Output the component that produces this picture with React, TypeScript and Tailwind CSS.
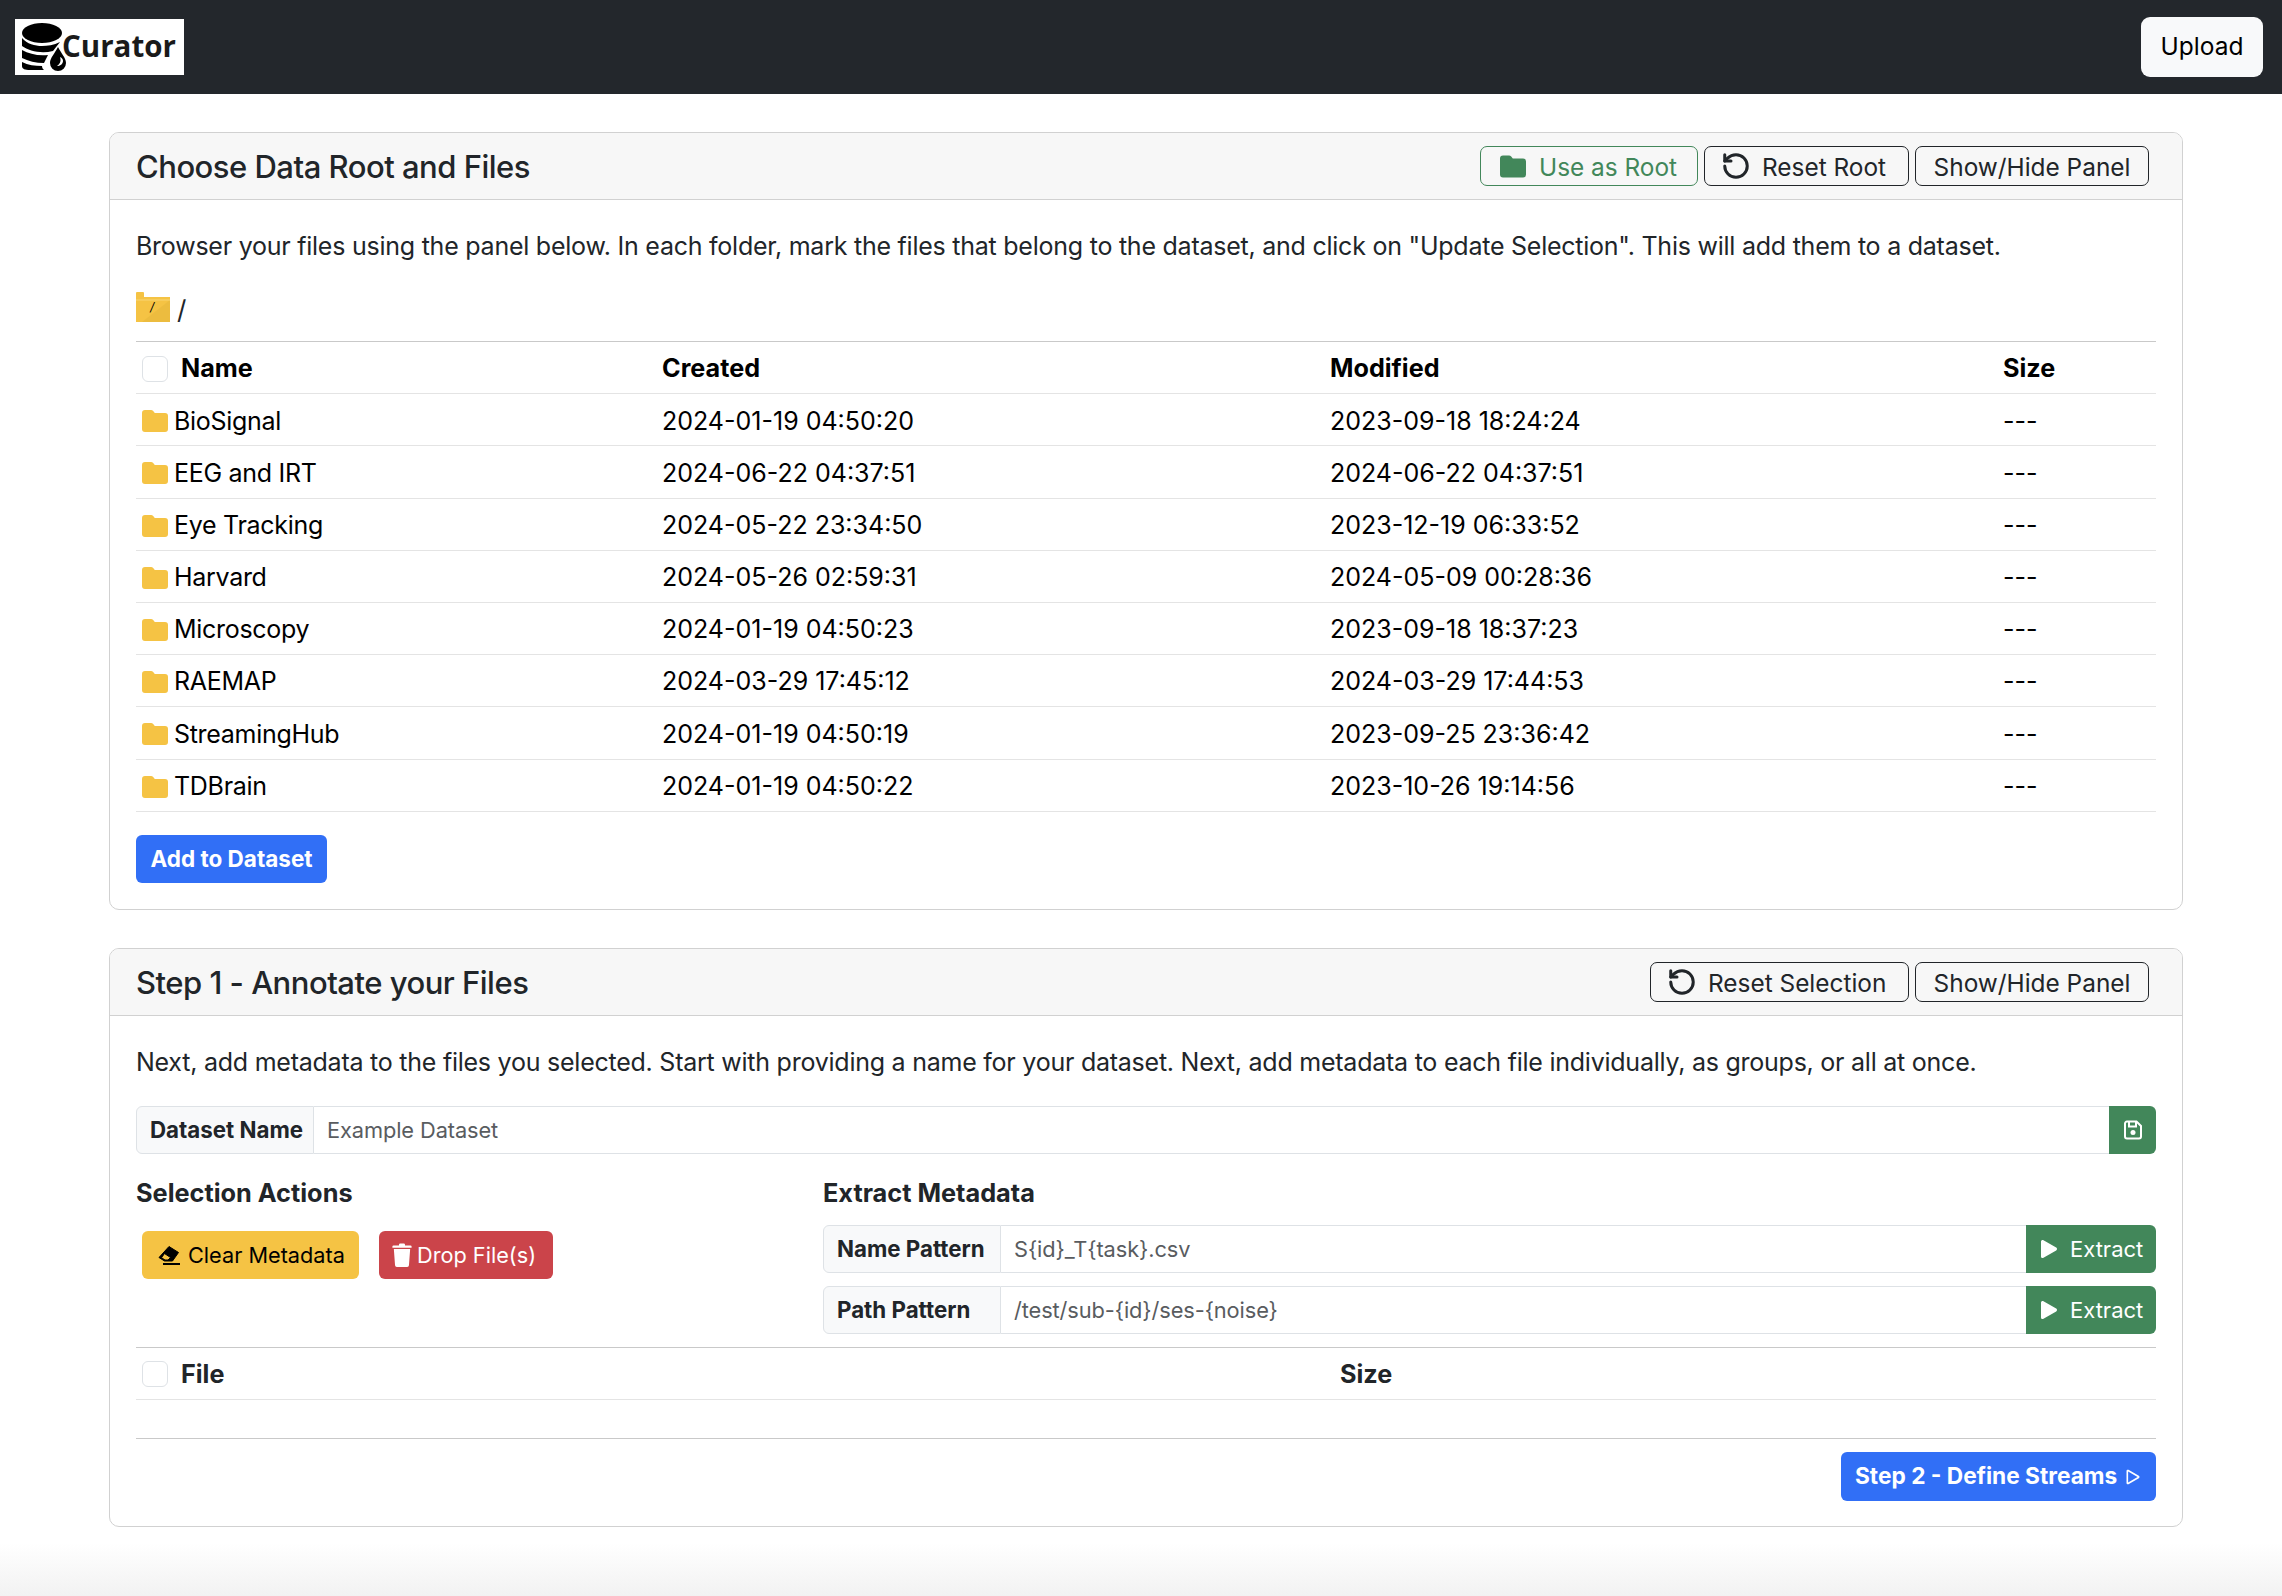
import React from "react";
import { RotateCcw } from "lucide-react";
import { BsPlay, BsPlayFill } from "react-icons/bs";

const rows = [
  ["BioSignal", "2024-01-19 04:50:20", "2023-09-18 18:24:24"],
  ["EEG and IRT", "2024-06-22 04:37:51", "2024-06-22 04:37:51"],
  ["Eye Tracking", "2024-05-22 23:34:50", "2023-12-19 06:33:52"],
  ["Harvard", "2024-05-26 02:59:31", "2024-05-09 00:28:36"],
  ["Microscopy", "2024-01-19 04:50:23", "2023-09-18 18:37:23"],
  ["RAEMAP", "2024-03-29 17:45:12", "2024-03-29 17:44:53"],
  ["StreamingHub", "2024-01-19 04:50:19", "2023-09-25 23:36:42"],
  ["TDBrain", "2024-01-19 04:50:22", "2023-10-26 19:14:56"],
];

function FolderFill({ className }: { className: string }) {
  return (
    <svg viewBox="0 0 26 22" className={className} fill="currentColor">
      <path d="M0 3a3 3 0 0 1 3-3h6a3 3 0 0 1 2.2 1l1.600 2H23a3 3 0 0 1 3 3v13a3 3 0 0 1-3 3H3a3 3 0 0 1-3-3z" />
    </svg>
  );
}

function OutlineBtn({ children, className = "" }: { children: React.ReactNode; className?: string }) {
  return (
    <button className={`h-10 pt-[2px] flex items-center rounded-[7px] border border-[#212529] text-[24.4px] text-[#212529] whitespace-nowrap ${className}`}>
      {children}
    </button>
  );
}

function Header({ title, children }: { title: string; children: React.ReactNode }) {
  return (
    <div className="h-[67px] flex items-center justify-between bg-[#f7f7f7] border-b border-[#d1d1d1] pl-[26px] pr-[33px] rounded-t-[9px]">
      <h5 className="text-[31px] tracking-[-0.5px] font-medium text-[#212529] pt-[2px]">{title}</h5>
      <div className="flex gap-[6px]">{children}</div>
    </div>
  );
}

function InputRow({ label, value, children }: { label: string; value: string; children: React.ReactNode }) {
  return (
    <div className="flex h-12">
      <div className="w-[178px] flex items-center px-[13px] bg-[#f8f9fa] border border-[#dee2e6] rounded-l-[6px] text-[22.3px] font-bold text-[#212529] whitespace-nowrap">{label}</div>
      <div className="flex-1 flex items-center px-[13px] border-y border-[#dee2e6] text-[21.8px] tracking-[-0.1px] text-[#595c5f]">{value}</div>
      {children}
    </div>
  );
}

function Extract() {
  return (
    <button className="w-[130px] h-12 flex items-center pl-[7px] gap-[5px] bg-[#42875a] rounded-r-[6px] text-[22px] text-white">
      <BsPlayFill className="w-[32px] h-[32px]" />
      Extract
    </button>
  );
}

function Reset() {
  return <RotateCcw className="w-[30px] h-[30px] -mt-[2px]" strokeWidth={2.4} />;
}

function Logo() {
  return (
    <div className="w-[169px] h-[56px] bg-white flex items-center pl-[7px] overflow-hidden">
      <svg viewBox="0 0 44 48" className="w-[44px] h-[48px] shrink-0" fill="#000">
        <ellipse cx="20" cy="10" rx="20" ry="10" />
        <path d="M0 15c5 6 13 8 20 8 5 0 12-1 18-4l-7 9c-12 3-24 0-31-5z" />
        <path d="M0 27c7 4 16 6 26 5l-4 8C14 40 6 38 0 35z" />
        <path d="M0 39c6 3 13 4 20 4 0 2 1 3 2 4H8c-5 0-8-1-8-4z" />
        <path fillRule="evenodd" d="M36 24c3 6 8 11 8 16a8 8 0 0 1-16 0c0-5 5-10 8-16zm2 10c1 3 1 6-3 9 3 0 6-2 6-5 0-2-1-3-3-4z" />
      </svg>
      <span className="font-['Open_Sans',sans-serif] font-bold text-[29.5px] leading-none text-[#1a1a1a] -ml-[4px] pb-[3px] whitespace-nowrap">Curator</span>
    </div>
  );
}

export default function App() {
  return (
    <div className="h-[1596px] overflow-hidden bg-white text-[#212529] font-['Inter',sans-serif] flex flex-col">
      <nav className="h-[94px] shrink-0 bg-[#23272c] flex items-center justify-between pl-[15px] pr-[19px]">
        <Logo />
        <button className="w-[122px] h-[60px] pb-[2px] rounded-[9px] bg-[#f8f9fa] text-[24.5px] text-black">Upload</button>
      </nav>

      <main className="flex-1 flex flex-col pl-[109px] pr-[99px] pt-[38px] gap-[38px] bg-[linear-gradient(to_bottom,#fff_1449px,#f2f2f2_1502px)]">
        <section className="border border-[#d1d1d1] rounded-[10px] h-[778px] bg-white">
          <Header title="Choose Data Root and Files">
            <OutlineBtn className="w-[218px] pl-[19px] gap-[13px] !border-[#42875a] !text-[#42875a]">
              <FolderFill className="w-[26px] h-[23px] -mt-[2px] text-[#42875a]" />
              Use as Root
            </OutlineBtn>
            <OutlineBtn className="w-[205px] pl-[16px] gap-[11px]">
              <Reset />
              Reset Root
            </OutlineBtn>
            <OutlineBtn className="w-[234px] justify-center">Show/Hide Panel</OutlineBtn>
          </Header>
          <div className="px-[26px] pt-[32px]">
            <p className="text-[25px] tracking-[-0.24px] leading-[28px]">Browser your files using the panel below. In each folder, mark the files that belong to the dataset, and click on "Update Selection". This will add them to a dataset.</p>
            <div className="flex items-center gap-[7px] mt-[32px] h-[30px] text-[26px]">
              <div className="relative w-[34px] h-[30px]">
                <svg viewBox="0 0 34 30" className="w-[34px] h-[30px]">
                  <path d="M0 1a1 1 0 0 1 1-1h6a1 1 0 0 1 1 1v4h26v25H0z" fill="#f5c344" />
                  <path d="M34 8v22H6z" fill="#ecbc3f" />
                  <path d="M0 8h34" stroke="#f9d675" strokeWidth="1" />
                </svg>
                <span className="absolute left-[14px] top-[8px] text-[12px] leading-[14px] italic text-black">/</span>
              </div>
              <span className="pt-[5px]">/</span>
            </div>
            <div className="mt-[19px] border-t border-[#c9c9c9]">
              <div className="h-[52.2px] pt-[2px] grid grid-cols-[526px_668px_673px_1fr] items-center border-b border-[#e4e4e4] text-[25.2px] font-bold text-black">
                <div className="flex items-center pl-[6px] gap-[13px]">
                  <span className="w-[26px] h-[26px] rounded-[6px] border border-[#dee2e6] bg-white" />
                  Name
                </div>
                <div>Created</div>
                <div>Modified</div>
                <div>Size</div>
              </div>
              {rows.map((r) => (
                <div key={r[0]} className="h-[52.2px] pt-[3px] grid grid-cols-[526px_668px_673px_1fr] items-center border-b border-[#e4e4e4] text-[25px] text-black">
                  <div className="flex items-center pl-[6px] gap-[6px] tracking-[-0.3px]">
                    <FolderFill className="w-[26px] h-[22px] text-[#f5c344]" />
                    {r[0]}
                  </div>
                  <div>{r[1]}</div>
                  <div>{r[2]}</div>
                  <div>---</div>
                </div>
              ))}
            </div>
            <button className="mt-[23px] w-[191px] h-12 rounded-[6px] bg-[#316ff6] text-white text-[22.5px] font-bold">Add to Dataset</button>
          </div>
        </section>

        <section className="border border-[#d1d1d1] rounded-[10px] h-[579px] bg-white">
          <Header title="Step 1 - Annotate your Files">
            <OutlineBtn className="w-[259px] pl-[16px] gap-[11px]">
              <Reset />
              Reset Selection
            </OutlineBtn>
            <OutlineBtn className="w-[234px] justify-center">Show/Hide Panel</OutlineBtn>
          </Header>
          <div className="px-[26px] pt-[32px]">
            <p className="text-[25px] tracking-[-0.24px] leading-[28px]">Next, add metadata to the files you selected. Start with providing a name for your dataset. Next, add metadata to each file individually, as groups, or all at once.</p>
            <div className="mt-[30px]">
              <InputRow label="Dataset Name" value="Example Dataset">
                <button className="w-[47px] h-12 flex items-center justify-center bg-[#42875a] rounded-r-[6px]">
                  <svg viewBox="0 0 20 20" className="w-[20px] h-[20px] text-white" fill="none" stroke="currentColor" strokeWidth="2">
                    <path d="M4 1.500h9.500l4.500 4.500v10.500a2 2 0 0 1-2 2H4a2 2 0 0 1-2-2v-13a2 2 0 0 1 2-2z" />
                    <path d="M6 1.500v5h7v-5" />
                    <circle cx="10" cy="12.500" r="2.500" fill="currentColor" stroke="none" />
                  </svg>
                </button>
              </InputRow>
            </div>
            <div className="mt-[24px] flex">
              <div className="w-[687px]">
                <h6 className="text-[25.3px] font-bold leading-[30px]">Selection Actions</h6>
                <div className="flex gap-[20px] mt-[23px] ml-[6px]">
                  <button className="w-[217px] h-12 flex items-center pl-[15px] gap-[7px] rounded-[6px] bg-[#f5c344] text-[21.7px] text-black whitespace-nowrap">
                    <svg viewBox="0 0 24 20" className="w-[24px] h-[20px]" fill="currentColor">
                      <path fillRule="evenodd" stroke="currentColor" strokeWidth="1" strokeLinejoin="round" d="M12 1.500l9.500 6-6 8.500H7.500L2 12.500zM7.500 8.500l6 4-2.500 2.500H8l-3.500-2.300z" />
                      <rect x="6" y="18" width="17" height="2" />
                    </svg>
                    Clear Metadata
                  </button>
                  <button className="w-[174px] h-12 flex items-center pl-[13px] gap-[5px] rounded-[6px] bg-[#cb444a] text-[21.7px] text-white whitespace-nowrap">
                    <svg viewBox="0 0 16 20" className="w-[20px] h-[24px]" fill="currentColor">
                      <path d="M5.500 1.500A1 1 0 0 1 6.500.5h3a1 1 0 0 1 1 1V2h4.500a1 1 0 0 1 1 1v1H0V3a1 1 0 0 1 1-1h4.500z" />
                      <path d="M1.200 5h13.600l-1 13.600A1.500 1.500 0 0 1 12.300 20H3.700a1.500 1.500 0 0 1-1.500-1.400z" />
                    </svg>
                    Drop File(s)
                  </button>
                </div>
              </div>
              <div className="flex-1">
                <h6 className="text-[25.3px] font-bold leading-[30px]">Extract Metadata</h6>
                <div className="mt-[17px] flex flex-col gap-[13px]">
                  <InputRow label="Name Pattern" value="S{id}_T{task}.csv"><Extract /></InputRow>
                  <InputRow label="Path Pattern" value="/test/sub-{id}/ses-{noise}"><Extract /></InputRow>
                </div>
              </div>
            </div>
            <div className="mt-[13px] pt-[2px] border-t border-t-[#c9c9c9] h-[53px] grid grid-cols-[1204px_1fr] items-center border-b-[#e4e4e4] border-b text-[25.2px] font-bold text-[#212529]">
              <div className="flex items-center pl-[6px] gap-[13px]">
                <span className="w-[26px] h-[26px] rounded-[6px] border border-[#dee2e6] bg-white" />
                File
              </div>
              <div>Size</div>
            </div>
            <div className="mt-[38px] border-t border-[#c9c9c9] pt-[13px] flex justify-end">
              <button className="w-[315px] h-[49px] flex items-center pl-[14px] gap-[3px] rounded-[6px] bg-[#316ff6] text-white text-[22.7px] font-bold whitespace-nowrap">
                Step 2 - Define Streams
                <BsPlay className="w-[26px] h-[26px]" />
              </button>
            </div>
          </div>
        </section>
      </main>
    </div>
  );
}
